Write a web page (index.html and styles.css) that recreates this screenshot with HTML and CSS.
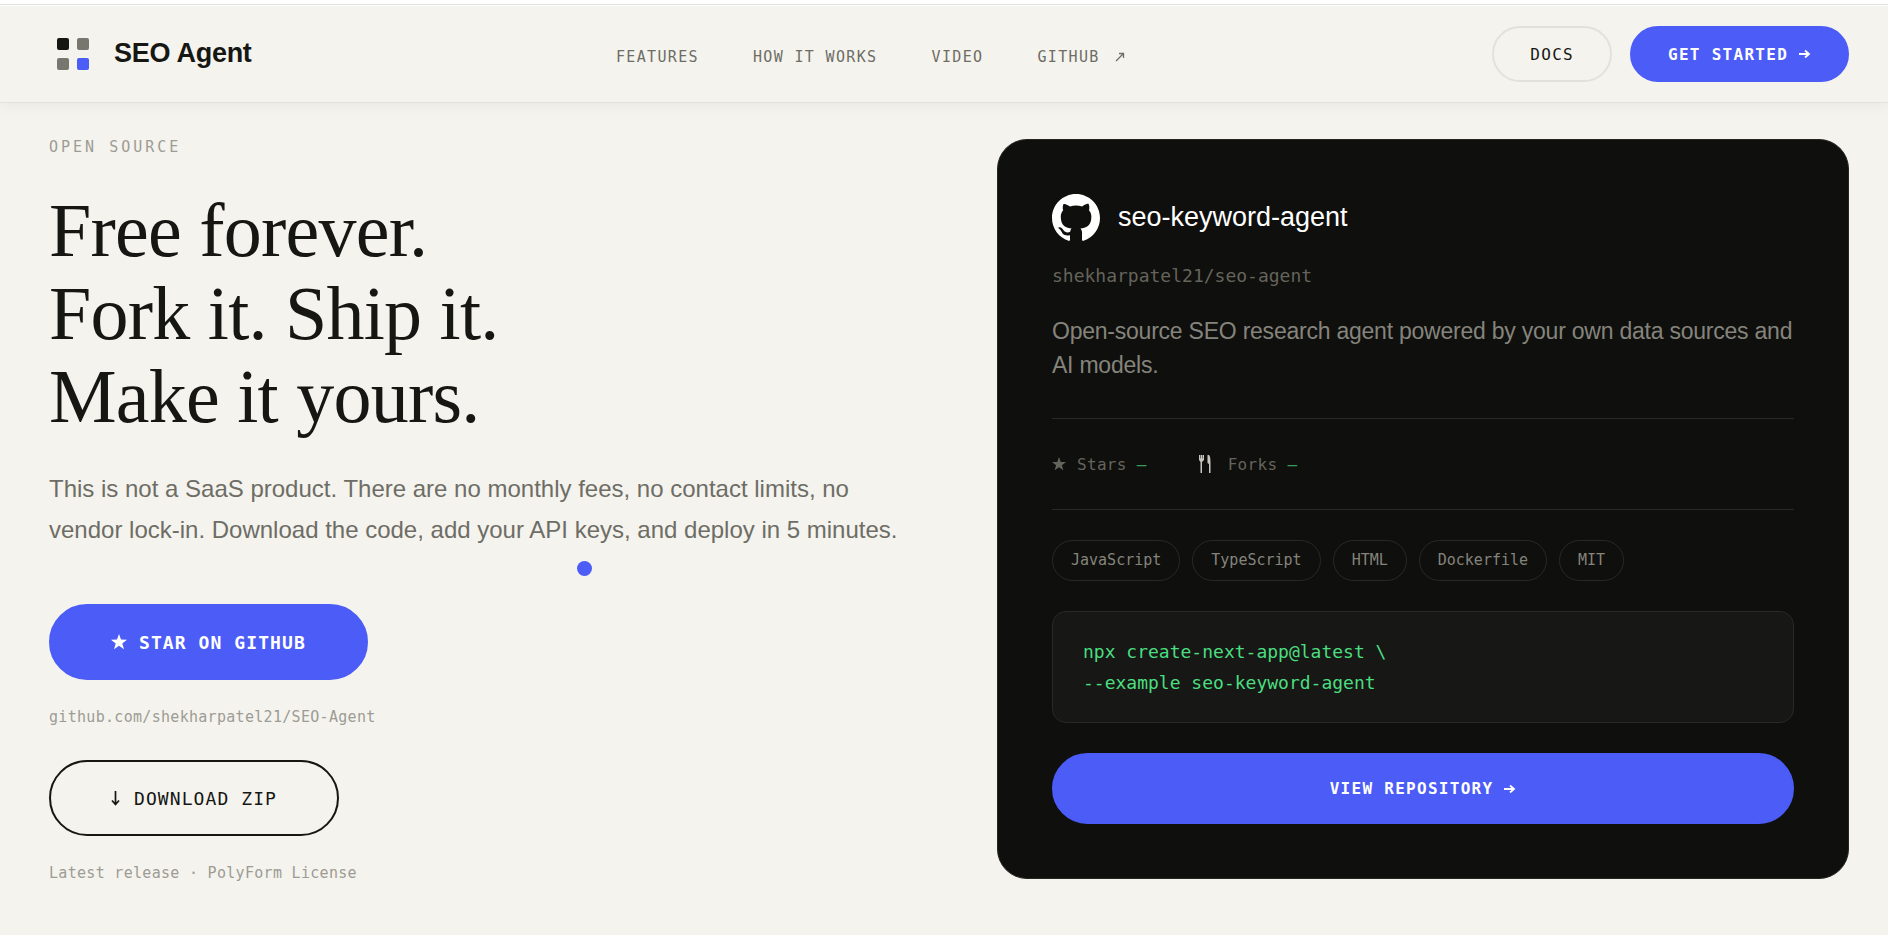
FILE: index.html
```html
<!DOCTYPE html>
<html lang="en">
<head>
    <meta charset="UTF-8">
    <meta name="viewport" content="width=device-width, initial-scale=1.0">
    <title>SEO Agent</title>
    <link rel="stylesheet" href="styles.css">
</head>
<body>
    <!-- Shared icons -->
    <svg class="sprite" aria-hidden="true">
        <symbol id="arrow-right" viewBox="0 0 12 12">
            <path d="M0 6h10M6 2.500l4 3.500-4 3.500" fill="none" stroke="currentColor" stroke-width="1.800"/>
        </symbol>
        <symbol id="star" viewBox="0 0 16 16">
            <path d="M8 0l2 5.600 6 .2-4.700 3.600 1.700 5.800L8 11.800l-5 3.400 1.700-5.800L0 5.800l6-.2z" fill="currentColor"/>
        </symbol>
    </svg>

    <div class="top-strip"></div>

    <header class="header">
        <a class="logo" href="#">
            <svg class="logo-mark" viewBox="0 0 48 48" aria-hidden="true">
                <rect x="8" y="8" width="12" height="12" rx="2" fill="#161613"/>
                <rect x="28" y="8" width="12" height="12" rx="2" fill="#77776f"/>
                <rect x="8" y="28" width="12" height="12" rx="2" fill="#77776f"/>
                <rect x="28" y="28" width="12" height="12" rx="2" fill="#4b5cf7"/>
            </svg>
            <span class="logo-text">SEO Agent</span>
        </a>

        <nav class="nav">
            <a href="#features">FEATURES</a>
            <a href="#how">HOW IT WORKS</a>
            <a href="#video">VIDEO</a>
            <a href="#github">GITHUB
                <svg class="icon-out" viewBox="0 0 10 10" aria-hidden="true">
                    <path d="M1 9l7-7M4 1.500h4.500V6" fill="none" stroke="currentColor" stroke-width="1.300"/>
                </svg>
            </a>
        </nav>

        <div class="actions">
            <a class="btn btn-small btn-line" href="#docs">DOCS</a>
            <a class="btn btn-small btn-blue" href="#start">GET STARTED <svg class="icon-arrow" aria-hidden="true"><use href="#arrow-right"/></svg></a>
        </div>
    </header>

    <main class="open-source">
        <section class="intro">
            <p class="eyebrow">OPEN SOURCE</p>
            <h1>Free forever.<br>Fork it. Ship it.<br>Make it yours.</h1>
            <p class="lead">This is not a SaaS product. There are no monthly fees, no contact limits, no vendor lock-in. Download the code, add your API keys, and deploy in 5 minutes.</p>

            <a class="btn btn-large btn-blue" href="#github"><svg class="icon-star" aria-hidden="true"><use href="#star"/></svg>STAR ON GITHUB</a>
            <p class="note">github.com/shekharpatel21/SEO-Agent</p>

            <a class="btn btn-large btn-dark" href="#download">
                <svg class="icon-down" viewBox="0 0 9 15" aria-hidden="true">
                    <path d="M4.500 0v13M1 9.500l3.500 4 3.500-4" fill="none" stroke="currentColor" stroke-width="1.700"/>
                </svg>DOWNLOAD ZIP</a>
            <p class="note">Latest release · PolyForm License</p>
        </section>

        <section class="repo-card">
            <div class="repo-head">
                <svg class="github-mark" viewBox="0 0 16 16" aria-hidden="true">
                    <path fill="currentColor" d="M8 0C3.580 0 0 3.580 0 8c0 3.540 2.290 6.530 5.470 7.590.4.070.55-.17.55-.38 0-.19-.01-.82-.01-1.490-2.010.37-2.530-.49-2.690-.94-.09-.23-.48-.94-.82-1.130-.28-.15-.68-.52-.01-.53.63-.01 1.080.58 1.230.82.72 1.210 1.870.87 2.330.66.07-.52.28-.87.51-1.070-1.780-.2-3.640-.89-3.640-3.950 0-.87.31-1.590.82-2.150-.08-.2-.36-1.020.08-2.120 0 0 .67-.21 2.200.82.64-.18 1.320-.27 2-.27.68 0 1.360.09 2 .27 1.530-1.040 2.200-.82 2.200-.82.44 1.100.16 1.920.08 2.120.51.56.82 1.270.82 2.150 0 3.070-1.870 3.750-3.650 3.950.29.25.54.73.54 1.480 0 1.070-.01 1.930-.01 2.200 0 .21.15.46.55.38A8.013 8.013 0 0016 8c0-4.420-3.580-8-8-8z"/>
                </svg>
                <h2>seo-keyword-agent</h2>
            </div>
            <p class="repo-path">shekharpatel21/seo-agent</p>
            <p class="repo-desc">Open-source SEO research agent powered by your own data sources and AI models.</p>

            <div class="stats">
                <span class="stat"><svg class="stat-star" aria-hidden="true"><use href="#star"/></svg>Stars <span class="stat-value">–</span></span>
                <span class="stat">
                    <svg class="stat-fork" viewBox="0 0 14 18" aria-hidden="true">
                        <path d="M0 0h5v5L3 7v11H1.500V7L0 5zM8.500 0H10q1.500 1 1.500 8v10H10V9L8.500 8z" fill="#c9c8c0"/>
                        <path d="M1.500 0v3.500M3.500 0v3.500" stroke="#0f0f0d" stroke-width=".5"/>
                    </svg>Forks <span class="stat-value">–</span></span>
            </div>

            <ul class="tags">
                <li>JavaScript</li>
                <li>TypeScript</li>
                <li>HTML</li>
                <li>Dockerfile</li>
                <li>MIT</li>
            </ul>

            <pre class="code"><code>npx create-next-app@latest \
--example seo-keyword-agent</code></pre>

            <a class="btn btn-wide btn-blue" href="#repo">VIEW REPOSITORY <svg class="icon-arrow" aria-hidden="true"><use href="#arrow-right"/></svg></a>
        </section>
    </main>

    <div class="cursor-dot"></div>
</body>
</html>
```

FILE: styles.css
```css
/* General Styles */
* {
    box-sizing: border-box;
}

body {
    margin: 0;
    background-color: #f4f3ee;
    color: #161613;
    font-family: "Liberation Sans", Arial, sans-serif;
}

h1, h2, p, ul, pre {
    margin: 0;
    padding: 0;
}

a {
    color: inherit;
    text-decoration: none;
}

.nav, .btn, .eyebrow, .note, .repo-path, .stats, .tags, .code code {
    font-family: "DejaVu Sans Mono", Consolas, monospace;
}

.sprite {
    display: none;
}

/* Header */
.top-strip {
    height: 6px;
    background: linear-gradient(#fff 4px, #e2e2de 4px, #e2e2de 5px, #fff 5px);
}

.header {
    display: flex;
    justify-content: space-between;
    align-items: center;
    padding: 20px 39px 20px 49px;
    border-bottom: 1px solid #e2e1dc;
    box-shadow: 0 4px 12px rgba(0, 0, 0, 0.04);
}

.logo {
    display: flex;
    align-items: center;
    gap: 17px;
}

.logo-mark {
    width: 48px;
    height: 48px;
}

.logo-text {
    font-size: 27px;
    font-weight: bold;
    letter-spacing: -0.01em;
    padding-bottom: 2px;
}

.nav {
    display: flex;
    gap: 54px;
    padding-top: 6px;
    font-size: 15px;
    letter-spacing: 0.09em;
    color: #6e6d65;
}

.icon-out {
    width: 10px;
    height: 10px;
    margin: 0 3px 0 5px;
}

.actions {
    display: flex;
    gap: 18px;
}

/* Buttons */
.btn {
    display: inline-flex;
    align-items: center;
    justify-content: center;
    border-radius: 40px;
    border: 2px solid transparent;
    white-space: pre;
}

.btn-small {
    height: 56px;
    padding: 0 36px;
    font-size: 16px;
    letter-spacing: 0.08em;
}

.btn-large {
    height: 76px;
    padding: 0 60px;
    font-size: 18px;
    letter-spacing: 0.06em;
}

.btn-wide {
    height: 71px;
    font-size: 16px;
    letter-spacing: 0.08em;
}

.btn-blue {
    background-color: #4b5cf7;
    border-color: #4b5cf7;
    color: #fff;
    font-weight: bold;
}

.btn-line {
    border-color: #e2e1dc;
}

.btn-dark {
    border-color: #161613;
}

.icon-arrow {
    width: 12px;
    height: 12px;
}

.icon-star {
    width: 16px;
    height: 16px;
    margin-right: 12px;
}

.icon-down {
    width: 9px;
    height: 15px;
    margin-right: 14px;
}

/* Open source section */
.open-source {
    display: grid;
    grid-template-columns: 1fr 1fr;
    gap: 96px;
    align-items: start;
    padding: 36px 39px 50px 49px;
}

.intro {
    display: flex;
    flex-direction: column;
    align-items: flex-start;
}

.eyebrow {
    font-size: 15px;
    line-height: 16px;
    letter-spacing: 0.2em;
    color: #9d9c94;
}

h1 {
    margin-top: 34px;
    font-family: "Liberation Serif", serif;
    font-size: 76px;
    font-weight: normal;
    line-height: 83px;
    letter-spacing: -0.01em;
}

.lead {
    margin: 30px 0 54px;
    font-size: 24px;
    line-height: 41px;
    color: #6e6d65;
}

.note {
    margin: 26px 0 32px;
    font-size: 15px;
    line-height: 22px;
    letter-spacing: 0.02em;
    color: #9d9c94;
}

.note:last-child {
    margin-bottom: 0;
}

/* Repository card */
.repo-card {
    display: flex;
    flex-direction: column;
    padding: 54px;
    background-color: #0f0f0d;
    border: 1px solid #252522;
    border-radius: 30px;
}

.repo-head {
    display: flex;
    align-items: center;
    gap: 18px;
    color: #fff;
}

.github-mark {
    width: 48px;
    height: 48px;
}

h2 {
    padding-bottom: 2px;
    font-size: 27px;
    font-weight: normal;
}

.repo-path {
    margin-top: 20px;
    font-size: 18px;
    line-height: 27px;
    color: #65645c;
}

.repo-desc {
    margin: 25px 0 36px;
    font-size: 23px;
    line-height: 34px;
    letter-spacing: -0.01em;
    color: #85847c;
}

.stats {
    display: flex;
    align-items: center;
    gap: 48px;
    height: 92px;
    border-top: 1px solid #292926;
    border-bottom: 1px solid #292926;
    font-size: 16px;
    letter-spacing: 0.02em;
    color: #65645c;
}

.stat {
    display: flex;
    align-items: center;
    white-space: pre;
}

.stat-star {
    width: 14px;
    height: 14px;
    margin-right: 11px;
}

.stat-fork {
    width: 14px;
    height: 18px;
    margin: 0 15px 0 4px;
}

.stat-value {
    color: #379a5b;
}

.tags {
    display: flex;
    flex-wrap: wrap;
    gap: 12px;
    margin: 30px 0;
    list-style: none;
    font-size: 15px;
    line-height: 39px;
    color: #85847c;
}

.tags li {
    padding: 0 18px;
    border: 1px solid #292926;
    border-radius: 21px;
}

.code {
    margin-bottom: 30px;
    padding: 24px 30px;
    background-color: #171715;
    border: 1px solid #292926;
    border-radius: 14px;
    font-size: 18px;
    line-height: 31px;
    color: #4ade80;
}

.cursor-dot {
    position: fixed;
    left: 577px;
    top: 561px;
    width: 15px;
    height: 15px;
    border-radius: 50%;
    background-color: #4b5cf7;
}

/* Responsive Design */
@media (max-width: 1100px) {
    .nav {
        display: none;
    }

    .open-source {
        grid-template-columns: 1fr;
    }
}
```
